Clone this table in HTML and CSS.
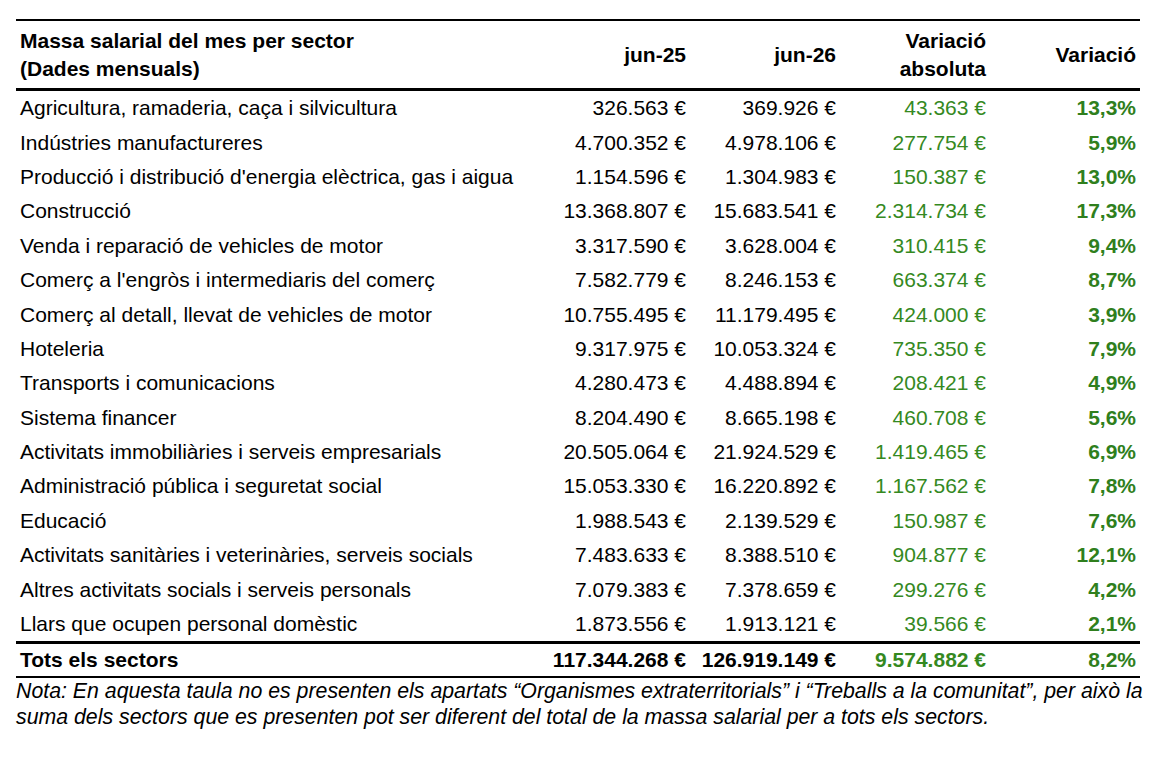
FILE: index.html
```html
<!DOCTYPE html>
<html lang="ca">
<head>
  <meta charset="UTF-8">
  <meta name="viewport" content="width=device-width, initial-scale=1.0">
  <title>Massa salarial per sector</title>
  <link rel="stylesheet" href="styles.css">
</head>
<body>
  <div class="container">
    <table class="salaris">
      <colgroup>
        <col class="col-label">
        <col class="col-num">
        <col class="col-num">
        <col class="col-num">
        <col class="col-pct">
      </colgroup>
      <thead>
        <tr>
          <th class="label">Massa salarial del mes per sector<br>(Dades mensuals)</th>
          <th>jun-25</th>
          <th>jun-26</th>
          <th>Variació<br>absoluta</th>
          <th>Variació</th>
        </tr>
      </thead>
      <tbody>
        <tr><td class="label">Agricultura, ramaderia, caça i silvicultura</td><td>326.563 €</td><td>369.926 €</td><td class="abs">43.363 €</td><td class="pct">13,3%</td></tr>
        <tr><td class="label">Indústries manufactureres</td><td>4.700.352 €</td><td>4.978.106 €</td><td class="abs">277.754 €</td><td class="pct">5,9%</td></tr>
        <tr><td class="label">Producció i distribució d'energia elèctrica, gas i aigua</td><td>1.154.596 €</td><td>1.304.983 €</td><td class="abs">150.387 €</td><td class="pct">13,0%</td></tr>
        <tr><td class="label">Construcció</td><td>13.368.807 €</td><td>15.683.541 €</td><td class="abs">2.314.734 €</td><td class="pct">17,3%</td></tr>
        <tr><td class="label">Venda i reparació de vehicles de motor</td><td>3.317.590 €</td><td>3.628.004 €</td><td class="abs">310.415 €</td><td class="pct">9,4%</td></tr>
        <tr><td class="label">Comerç a l'engròs i intermediaris del comerç</td><td>7.582.779 €</td><td>8.246.153 €</td><td class="abs">663.374 €</td><td class="pct">8,7%</td></tr>
        <tr><td class="label">Comerç al detall, llevat de vehicles de motor</td><td>10.755.495 €</td><td>11.179.495 €</td><td class="abs">424.000 €</td><td class="pct">3,9%</td></tr>
        <tr><td class="label">Hoteleria</td><td>9.317.975 €</td><td>10.053.324 €</td><td class="abs">735.350 €</td><td class="pct">7,9%</td></tr>
        <tr><td class="label">Transports i comunicacions</td><td>4.280.473 €</td><td>4.488.894 €</td><td class="abs">208.421 €</td><td class="pct">4,9%</td></tr>
        <tr><td class="label">Sistema financer</td><td>8.204.490 €</td><td>8.665.198 €</td><td class="abs">460.708 €</td><td class="pct">5,6%</td></tr>
        <tr><td class="label">Activitats immobiliàries i serveis empresarials</td><td>20.505.064 €</td><td>21.924.529 €</td><td class="abs">1.419.465 €</td><td class="pct">6,9%</td></tr>
        <tr><td class="label">Administració pública i seguretat social</td><td>15.053.330 €</td><td>16.220.892 €</td><td class="abs">1.167.562 €</td><td class="pct">7,8%</td></tr>
        <tr><td class="label">Educació</td><td>1.988.543 €</td><td>2.139.529 €</td><td class="abs">150.987 €</td><td class="pct">7,6%</td></tr>
        <tr><td class="label">Activitats sanitàries i veterinàries, serveis socials</td><td>7.483.633 €</td><td>8.388.510 €</td><td class="abs">904.877 €</td><td class="pct">12,1%</td></tr>
        <tr><td class="label">Altres activitats socials i serveis personals</td><td>7.079.383 €</td><td>7.378.659 €</td><td class="abs">299.276 €</td><td class="pct">4,2%</td></tr>
        <tr><td class="label">Llars que ocupen personal domèstic</td><td>1.873.556 €</td><td>1.913.121 €</td><td class="abs">39.566 €</td><td class="pct">2,1%</td></tr>
      </tbody>
      <tfoot>
        <tr><td class="label">Tots els sectors</td><td>117.344.268 €</td><td>126.919.149 €</td><td class="abs">9.574.882 €</td><td class="pct">8,2%</td></tr>
      </tfoot>
    </table>
    <p class="nota">Nota: En aquesta taula no es presenten els apartats “Organismes extraterritorials” i “Treballs a la comunitat”, per això la suma dels sectors que es presenten pot ser diferent del total de la massa salarial per a tots els sectors.</p>
  </div>
</body>
</html>
```
FILE: styles.css
```css
body {
  font-family: "Liberation Sans", Arial, sans-serif;
  background-color: #fff;
  color: #000;
  margin: 0;
  padding: 0;
}
.container {
  padding: 19px 12px 0 16px;
}
.salaris {
  width: 1124px;
  table-layout: fixed;
  border-collapse: collapse;
  font-size: 21px;
}
.col-label {
  width: 526px;
}
.col-num {
  width: 150px;
}
.col-pct {
  width: 148px;
}
.salaris th,
.salaris td {
  padding: 0 6px 0 4px;
  text-align: right;
  white-space: nowrap;
}
.salaris td.pct,
.salaris th:last-child {
  padding-right: 4px;
}
.salaris .label {
  text-align: left;
}
.salaris thead tr {
  border-top: 2px solid #000;
  border-bottom: 3px solid #000;
}
.salaris th {
  height: 67px;
  font-weight: bold;
  line-height: 28px;
}
.salaris tbody td {
  height: 34.4px;
  line-height: 24px;
}
.salaris tfoot tr {
  border-top: 3px solid #000;
  border-bottom: 2px solid #000;
}
.salaris tfoot td {
  height: 32px;
  font-weight: bold;
}
.abs {
  color: #35891f;
}
.pct {
  color: #2f7f1d;
  font-weight: bold;
}
.nota {
  margin: 0;
  font-size: 21.3px;
  font-style: italic;
  line-height: 26px;
}
```
